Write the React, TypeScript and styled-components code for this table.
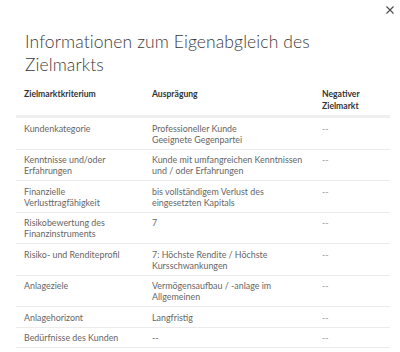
import styled, { createGlobalStyle } from 'styled-components';

const GlobalStyles = createGlobalStyle`
  html, body {
    margin: 0;
    padding: 0;
    background: #ffffff;
  }
  body {
    font-family: Lato, "Open Sans", "Liberation Sans", sans-serif;
    -webkit-font-smoothing: antialiased;
  }
`;

type Row = { criterion: string[]; value: string[]; negative: string };

const rows: Row[] = [
  { criterion: ['Kundenkategorie'], value: ['Professioneller Kunde', 'Geeignete Gegenpartei'], negative: '--' },
  { criterion: ['Kenntnisse und/oder', 'Erfahrungen'], value: ['Kunde mit umfangreichen Kenntnissen', 'und / oder Erfahrungen'], negative: '--' },
  { criterion: ['Finanzielle', 'Verlusttragfähigkeit'], value: ['bis vollständigem Verlust des', 'eingesetzten Kapitals'], negative: '--' },
  { criterion: ['Risikobewertung des', 'Finanzinstruments'], value: ['7'], negative: '--' },
  { criterion: ['Risiko- und Renditeprofil'], value: ['7: Höchste Rendite / Höchste', 'Kursschwankungen'], negative: '--' },
  { criterion: ['Anlageziele'], value: ['Vermögensaufbau / -anlage im', 'Allgemeinen'], negative: '--' },
  { criterion: ['Anlagehorizont'], value: ['Langfristig'], negative: '--' },
  { criterion: ['Bedürfnisse des Kunden'], value: ['--'], negative: '--' },
];

const Lines = ({ lines }: { lines: string[] }) => (
  <>
    {lines.map((line) => (
      <Line key={line}>{line}</Line>
    ))}
  </>
);

export default function App() {
  return (
    <>
      <GlobalStyles />
      <Dialog>
        <TopBar>
          <CloseButton type='button' aria-label='Schließen'>
            <svg width='8' height='8' viewBox='0 0 8 8'>
              <path d='M0.5 0.5 L7.5 7.5 M7.5 0.5 L0.5 7.5' stroke='#4a4a4a' strokeWidth='1.1' />
            </svg>
          </CloseButton>
        </TopBar>
        <Title>Informationen zum Eigenabgleich des Zielmarkts</Title>
        <Table>
          <HeaderRow>
            <HeaderCell>Zielmarktkriterium</HeaderCell>
            <HeaderCell>Ausprägung</HeaderCell>
            <HeaderCell>
              <Lines lines={['Negativer', 'Zielmarkt']} />
            </HeaderCell>
          </HeaderRow>
          {rows.map((row) => (
            <BodyRow key={row.criterion.join(' ')}>
              <Cell>
                <Lines lines={row.criterion} />
              </Cell>
              <Cell>
                <Lines lines={row.value} />
              </Cell>
              <Cell $muted>{row.negative}</Cell>
            </BodyRow>
          ))}
        </Table>
      </Dialog>
    </>
  );
}

const Dialog = styled.div`
  width: 400px;
  height: 352px;
  box-sizing: border-box;
  padding: 0 10px 0 16px;
  background: #ffffff;
  overflow: hidden;
`;

const TopBar = styled.div`
  display: flex;
  justify-content: flex-end;
  height: 24px;
  margin-right: -6px;
  padding-top: 6px;
  box-sizing: border-box;
`;

const CloseButton = styled.button`
  display: flex;
  align-items: flex-start;
  justify-content: center;
  width: 12px;
  height: 12px;
  padding: 0;
  border: 0;
  background: none;
  cursor: pointer;
`;

const Title = styled.h1`
  margin: 6px 0 12px 9px;
  width: 320px;
  font-size: 17.5px;
  line-height: 23px;
  font-weight: 300;
  color: #3a3a3a;
  letter-spacing: 0.1px;
`;

const Table = styled.div`
  display: flex;
  flex-direction: column;
  width: 374px;
`;

const HeaderRow = styled.div`
  display: grid;
  grid-template-columns: 128px 170px 1fr;
  padding-bottom: 3px;
  border-bottom: 3px solid #efefef;
`;

const BodyRow = styled.div`
  display: grid;
  grid-template-columns: 128px 170px 1fr;
  border-bottom: 1px solid #ebebeb;
`;

const HeaderCell = styled.div`
  padding: 0 8px;
  font-size: 8.6px;
  line-height: 12px;
  font-weight: 700;
  color: #333333;
`;

const Cell = styled.div<{ $muted?: boolean }>`
  padding: 4.5px 8px 4px;
  font-size: 8.9px;
  line-height: 11px;
  color: ${({ $muted }) => ($muted ? '#9a9a9a' : '#666666')};
`;

const Line = styled.div`
  white-space: nowrap;
`;
